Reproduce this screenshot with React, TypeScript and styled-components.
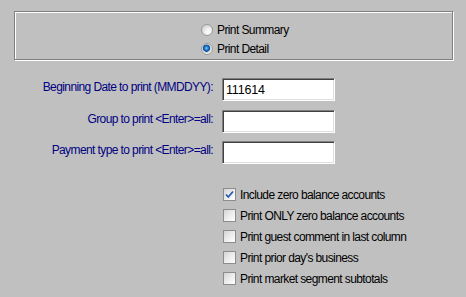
import { createGlobalStyle, styled } from "styled-components";

const GlobalStyle = createGlobalStyle`
  html, body {
    margin: 0;
    padding: 0;
    background: #c0c0c0;
  }
  body {
    font-family: "Liberation Sans", Arial, sans-serif;
    font-size: 12px;
    letter-spacing: -0.6px;
  }
`;

const checkOptions = [
  { label: "Include zero balance accounts", checked: true },
  { label: "Print ONLY zero balance accounts", checked: false },
  { label: "Print guest comment in last column", checked: false },
  { label: "Print prior day's business", checked: false },
  { label: "Print market segment subtotals", checked: false },
];

const fields = [
  { label: "Beginning Date to print (MMDDYY):", value: "111614" },
  { label: "Group to print <Enter>=all:", value: "" },
  { label: "Payment type to print <Enter>=all:", value: "" },
];

function App() {
  return (
    <>
      <GlobalStyle />
      <Page>
        <GroupBox>
          <RadioRow>
            <Radio $selected={false} />
            <span>Print Summary</span>
          </RadioRow>
          <RadioRow>
            <Radio $selected={true} />
            <span>Print Detail</span>
          </RadioRow>
        </GroupBox>
        <FieldGrid>
          {fields.map((f) => (
            <FieldRow key={f.label}>
              <FieldLabel>{f.label}</FieldLabel>
              <TextBox>{f.value}</TextBox>
            </FieldRow>
          ))}
        </FieldGrid>
        <CheckList>
          {checkOptions.map((o) => (
            <CheckRow key={o.label}>
              <CheckBox>
                {o.checked && (
                  <svg width="9" height="9" viewBox="0 0 9 9">
                    <path
                      d="M1 4.5 L3.3 7 L8 1.5"
                      fill="none"
                      stroke="#2a5bb0"
                      strokeWidth="1.8"
                    />
                  </svg>
                )}
              </CheckBox>
              <span>{o.label}</span>
            </CheckRow>
          ))}
        </CheckList>
      </Page>
    </>
  );
}

const Page = styled.div`
  width: 466px;
  height: 297px;
  padding-top: 11px;
  box-sizing: border-box;
  background: #c0c0c0;
  color: #000;
`;

const GroupBox = styled.div`
  margin-left: 14px;
  width: 439px;
  height: 49px;
  border: 1px solid #808080;
  box-shadow: inset 1px 1px 0 #fff, 1px 1px 0 #fff;
  box-sizing: border-box;
  padding: 8px 0 0 186px;
  display: flex;
  flex-direction: column;
`;

const RadioRow = styled.div`
  display: flex;
  align-items: center;
  gap: 4px;
  height: 20px;
`;

const Radio = styled.div<{ $selected: boolean }>`
  width: 12px;
  height: 12px;
  border-radius: 50%;
  box-sizing: border-box;
  border: 1px solid #9a9a9a;
  background: ${(p) =>
    p.$selected
      ? "radial-gradient(circle at 45% 42%, #8fd0ff 0, #2b86d6 1.5px, #0b4f9c 3.3px, #d0d0d0 3.9px, #f4f4f4 6px)"
      : "radial-gradient(circle at 65% 70%, #fff 0, #f2f2f2 3px, #d6d6d6 7px)"};
`;

const FieldGrid = styled.div`
  margin-top: 18px;
  display: flex;
  flex-direction: column;
  gap: 8.5px;
`;

const FieldRow = styled.div`
  display: grid;
  grid-template-columns: 213px 113px;
  column-gap: 9px;
  align-items: start;
`;

const FieldLabel = styled.div`
  color: #000080;
  text-align: right;
  padding-top: 2px;
  white-space: nowrap;
`;

const TextBox = styled.div`
  height: 23px;
  box-sizing: border-box;
  background: #fff;
  border-top: 1px solid #808080;
  border-left: 1px solid #808080;
  border-right: 1px solid #fff;
  border-bottom: 1px solid #fff;
  box-shadow: inset 1px 1px 0 #404040, inset -1px -1px 0 #dfdfdf;
  padding: 4px 0 0 3px;
  font-size: 12.5px;
  letter-spacing: -0.2px;
`;

const CheckList = styled.div`
  margin-top: 20px;
  padding-left: 223px;
  display: flex;
  flex-direction: column;
`;

const CheckRow = styled.div`
  height: 21px;
  display: flex;
  align-items: center;
  gap: 4px;
`;

const CheckBox = styled.div`
  width: 13px;
  height: 13px;
  box-sizing: border-box;
  border: 1px solid #8c8c8c;
  background: linear-gradient(135deg, #d4d4d4 0%, #ececec 50%, #fff 100%);
  display: flex;
  align-items: center;
  justify-content: center;
`;

export default App;
